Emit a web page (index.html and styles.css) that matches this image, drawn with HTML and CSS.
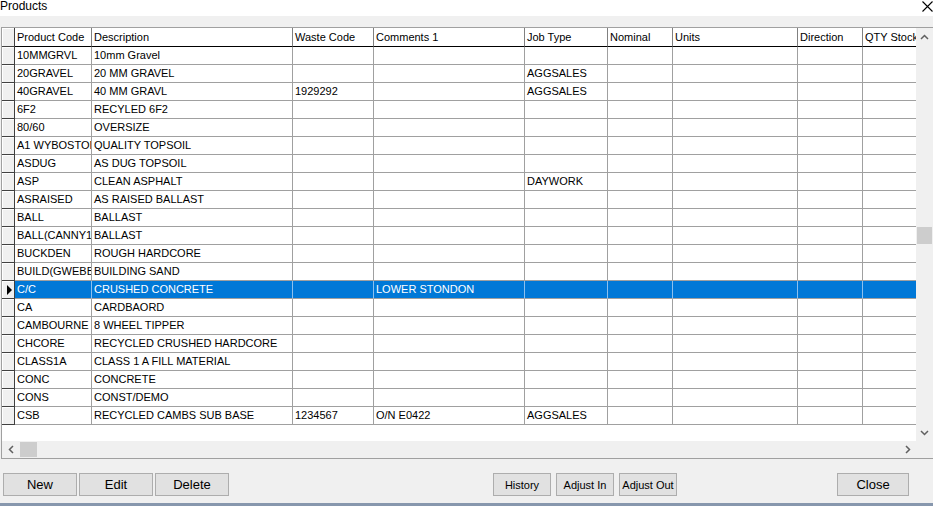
FILE: index.html
```html
<!DOCTYPE html>
<html lang="en">
<head>
    <meta charset="UTF-8">
    <title>Products</title>
    <link rel="stylesheet" href="styles.css">
</head>
<body>
    <div class="window">
        <div class="title-bar">
            <span class="title">Products</span>
            <svg class="close-x" width="11" height="11" viewBox="0 0 11 11">
                <path d="M0.5 0.5 L10.5 10.5 M10.5 0.5 L0.5 10.5" stroke="#000" stroke-width="1.1" fill="none"/>
            </svg>
        </div>

        <div class="grid-frame">
            <div class="grid-main">
                <div class="grid-view">
                    <div class="row header">
                        <div class="ind"></div><div class="c">Product Code</div><div class="c">Description</div><div class="c">Waste Code</div><div class="c">Comments 1</div><div class="c">Job Type</div><div class="c">Nominal</div><div class="c">Units</div><div class="c">Direction</div><div class="c">QTY Stock</div>
                    </div>
                    <div class="row"><div class="ind"></div><div class="c">10MMGRVL</div><div class="c">10mm Gravel</div><div class="c"></div><div class="c"></div><div class="c"></div><div class="c"></div><div class="c"></div><div class="c"></div><div class="c"></div></div>
                    <div class="row"><div class="ind"></div><div class="c">20GRAVEL</div><div class="c">20 MM GRAVEL</div><div class="c"></div><div class="c"></div><div class="c">AGGSALES</div><div class="c"></div><div class="c"></div><div class="c"></div><div class="c"></div></div>
                    <div class="row"><div class="ind"></div><div class="c">40GRAVEL</div><div class="c">40 MM GRAVL</div><div class="c">1929292</div><div class="c"></div><div class="c">AGGSALES</div><div class="c"></div><div class="c"></div><div class="c"></div><div class="c"></div></div>
                    <div class="row"><div class="ind"></div><div class="c">6F2</div><div class="c">RECYLED 6F2</div><div class="c"></div><div class="c"></div><div class="c"></div><div class="c"></div><div class="c"></div><div class="c"></div><div class="c"></div></div>
                    <div class="row"><div class="ind"></div><div class="c">80/60</div><div class="c">OVERSIZE</div><div class="c"></div><div class="c"></div><div class="c"></div><div class="c"></div><div class="c"></div><div class="c"></div><div class="c"></div></div>
                    <div class="row"><div class="ind"></div><div class="c">A1 WYBOSTON</div><div class="c">QUALITY TOPSOIL</div><div class="c"></div><div class="c"></div><div class="c"></div><div class="c"></div><div class="c"></div><div class="c"></div><div class="c"></div></div>
                    <div class="row"><div class="ind"></div><div class="c">ASDUG</div><div class="c">AS DUG TOPSOIL</div><div class="c"></div><div class="c"></div><div class="c"></div><div class="c"></div><div class="c"></div><div class="c"></div><div class="c"></div></div>
                    <div class="row"><div class="ind"></div><div class="c">ASP</div><div class="c">CLEAN ASPHALT</div><div class="c"></div><div class="c"></div><div class="c">DAYWORK</div><div class="c"></div><div class="c"></div><div class="c"></div><div class="c"></div></div>
                    <div class="row"><div class="ind"></div><div class="c">ASRAISED</div><div class="c">AS RAISED BALLAST</div><div class="c"></div><div class="c"></div><div class="c"></div><div class="c"></div><div class="c"></div><div class="c"></div><div class="c"></div></div>
                    <div class="row"><div class="ind"></div><div class="c">BALL</div><div class="c">BALLAST</div><div class="c"></div><div class="c"></div><div class="c"></div><div class="c"></div><div class="c"></div><div class="c"></div><div class="c"></div></div>
                    <div class="row"><div class="ind"></div><div class="c">BALL(CANNY15)</div><div class="c">BALLAST</div><div class="c"></div><div class="c"></div><div class="c"></div><div class="c"></div><div class="c"></div><div class="c"></div><div class="c"></div></div>
                    <div class="row"><div class="ind"></div><div class="c">BUCKDEN</div><div class="c">ROUGH HARDCORE</div><div class="c"></div><div class="c"></div><div class="c"></div><div class="c"></div><div class="c"></div><div class="c"></div><div class="c"></div></div>
                    <div class="row"><div class="ind"></div><div class="c">BUILD(GWEBB)</div><div class="c">BUILDING SAND</div><div class="c"></div><div class="c"></div><div class="c"></div><div class="c"></div><div class="c"></div><div class="c"></div><div class="c"></div></div>
                    <div class="row selected"><div class="ind"><span class="pointer"></span></div><div class="c">C/C</div><div class="c">CRUSHED CONCRETE</div><div class="c"></div><div class="c">LOWER STONDON</div><div class="c"></div><div class="c"></div><div class="c"></div><div class="c"></div><div class="c"></div></div>
                    <div class="row"><div class="ind"></div><div class="c">CA</div><div class="c">CARDBAORD</div><div class="c"></div><div class="c"></div><div class="c"></div><div class="c"></div><div class="c"></div><div class="c"></div><div class="c"></div></div>
                    <div class="row"><div class="ind"></div><div class="c">CAMBOURNE</div><div class="c">8 WHEEL TIPPER</div><div class="c"></div><div class="c"></div><div class="c"></div><div class="c"></div><div class="c"></div><div class="c"></div><div class="c"></div></div>
                    <div class="row"><div class="ind"></div><div class="c">CHCORE</div><div class="c">RECYCLED CRUSHED HARDCORE</div><div class="c"></div><div class="c"></div><div class="c"></div><div class="c"></div><div class="c"></div><div class="c"></div><div class="c"></div></div>
                    <div class="row"><div class="ind"></div><div class="c">CLASS1A</div><div class="c">CLASS 1 A FILL MATERIAL</div><div class="c"></div><div class="c"></div><div class="c"></div><div class="c"></div><div class="c"></div><div class="c"></div><div class="c"></div></div>
                    <div class="row"><div class="ind"></div><div class="c">CONC</div><div class="c">CONCRETE</div><div class="c"></div><div class="c"></div><div class="c"></div><div class="c"></div><div class="c"></div><div class="c"></div><div class="c"></div></div>
                    <div class="row"><div class="ind"></div><div class="c">CONS</div><div class="c">CONST/DEMO</div><div class="c"></div><div class="c"></div><div class="c"></div><div class="c"></div><div class="c"></div><div class="c"></div><div class="c"></div></div>
                    <div class="row"><div class="ind"></div><div class="c">CSB</div><div class="c">RECYCLED CAMBS SUB BASE</div><div class="c">1234567</div><div class="c">O/N E0422</div><div class="c">AGGSALES</div><div class="c"></div><div class="c"></div><div class="c"></div><div class="c"></div></div>
                </div>

                <!-- barra de rolagem vertical -->
                <div class="vscroll">
                    <div class="arrow-box">
                        <svg width="9" height="6" viewBox="0 0 9 6"><path d="M1 5 L4.5 1.5 L8 5" stroke="#606060" stroke-width="1.5" fill="none"/></svg>
                    </div>
                    <div class="vtrack"><div class="vthumb"></div></div>
                    <div class="arrow-box">
                        <svg width="9" height="6" viewBox="0 0 9 6"><path d="M1 1 L4.5 4.5 L8 1" stroke="#606060" stroke-width="1.5" fill="none"/></svg>
                    </div>
                </div>
            </div>

            <!-- barra de rolagem horizontal -->
            <div class="hscroll-row">
                <div class="hscroll">
                    <div class="arrow-box">
                        <svg width="6" height="9" viewBox="0 0 6 9"><path d="M5 1 L1.5 4.5 L5 8" stroke="#606060" stroke-width="1.5" fill="none"/></svg>
                    </div>
                    <div class="htrack"><div class="hthumb"></div></div>
                    <div class="arrow-box">
                        <svg width="6" height="9" viewBox="0 0 6 9"><path d="M1 1 L4.5 4.5 L1 8" stroke="#606060" stroke-width="1.5" fill="none"/></svg>
                    </div>
                </div>
                <div class="corner"></div>
            </div>
        </div>

        <div class="buttons">
            <div class="btn-group">
                <button class="btn big">New</button>
                <button class="btn big">Edit</button>
                <button class="btn big">Delete</button>
            </div>
            <div class="btn-group mid">
                <button class="btn small">History</button>
                <button class="btn small">Adjust In</button>
                <button class="btn small">Adjust Out</button>
            </div>
            <button class="btn big close-btn">Close</button>
        </div>
        <div class="frame-bottom"></div>
    </div>
</body>
</html>
```

FILE: styles.css
```css
body {
    margin: 0;
    padding: 0;
    background-color: #f0f0f0;
    font-family: "Liberation Sans", Arial, sans-serif;
    color: #000;
}
.window {
    width: 933px;
    height: 506px;
    overflow: hidden;
}
.title-bar {
    height: 16px;
    background-color: #fff;
    display: flex;
    justify-content: space-between;
    align-items: flex-start;
}
.title {
    font-size: 12px;
    line-height: 13px;
    padding-left: 0;
}
.close-x {
    margin-top: 1px;
    margin-right: 0;
}
.grid-frame {
    margin-top: 11px;
    margin-left: 1px;
    border-left: 1px solid #a0a0a0;
    border-top: 1px solid #a0a0a0;
    border-bottom: 1px solid #a0a0a0;
}
.grid-main {
    display: flex;
    height: 413px;
}
.grid-view {
    width: 914px;
    background-color: #fff;
    overflow: hidden;
}
.row {
    display: grid;
    grid-template-columns: 13px 77px 201px 81px 151px 83px 65px 125px 65px 70px;
    height: 18px;
    font-size: 11px;
}
.row .c {
    box-sizing: border-box;
    border-right: 1px solid #a0a0a0;
    border-bottom: 1px solid #a0a0a0;
    padding-left: 2px;
    line-height: 17px;
    white-space: nowrap;
    overflow: hidden;
}
.row .ind {
    box-sizing: border-box;
    background-color: #f0f0f0;
    border-right: 1px solid #404040;
    border-bottom: 1px solid #404040;
    box-shadow: inset 1px 1px 0 #fff;
    display: flex;
    align-items: center;
    justify-content: center;
}
.row.header {
    height: 19px;
}
.row.header .c {
    border-right-color: #808080;
    border-bottom-color: #000;
    line-height: 18px;
}
.row.selected .c {
    background-color: #0078d7;
    color: #fff;
    border-right-color: #8cc0ee;
}
.pointer {
    width: 0;
    height: 0;
    border-top: 5px solid transparent;
    border-bottom: 5px solid transparent;
    border-left: 5px solid #000;
    margin-left: 2px;
}
.vscroll {
    width: 17px;
    display: flex;
    flex-direction: column;
    background-color: #f0f0f0;
}
.arrow-box {
    width: 17px;
    height: 17px;
    display: flex;
    align-items: center;
    justify-content: center;
    flex-shrink: 0;
}
.vtrack {
    flex: 1;
}
.vthumb {
    margin-top: 182px;
    margin-left: 1px;
    width: 15px;
    height: 17px;
    background-color: #cdcdcd;
}
.hscroll-row {
    display: flex;
    height: 17px;
}
.hscroll {
    width: 914px;
    display: flex;
    background-color: #f0f0f0;
}
.htrack {
    flex: 1;
    display: flex;
    align-items: center;
}
.hthumb {
    margin-left: 1px;
    width: 17px;
    height: 15px;
    background-color: #cdcdcd;
}
.corner {
    width: 17px;
    background-color: #f0f0f0;
}
.buttons {
    display: flex;
    margin-top: 14px;
    padding-left: 3px;
    height: 23px;
}
.btn-group {
    display: flex;
    gap: 2px;
}
.btn-group.mid {
    gap: 5px;
    margin-left: 264px;
}
.btn {
    box-sizing: border-box;
    height: 23px;
    padding: 0;
    background-color: #e1e1e1;
    border: 1px solid #adadad;
    border-radius: 0;
    font-family: "Liberation Sans", Arial, sans-serif;
    color: #000;
    cursor: pointer;
}
.btn.big {
    width: 74px;
    font-size: 13px;
}
.btn.small {
    width: 58px;
    font-size: 11px;
}
.close-btn {
    margin-left: 160px;
}
.btn.big.close-btn {
    width: 72px;
}
.frame-bottom {
    margin-top: 7px;
    height: 3px;
    background-color: #8797ad;
}
```
